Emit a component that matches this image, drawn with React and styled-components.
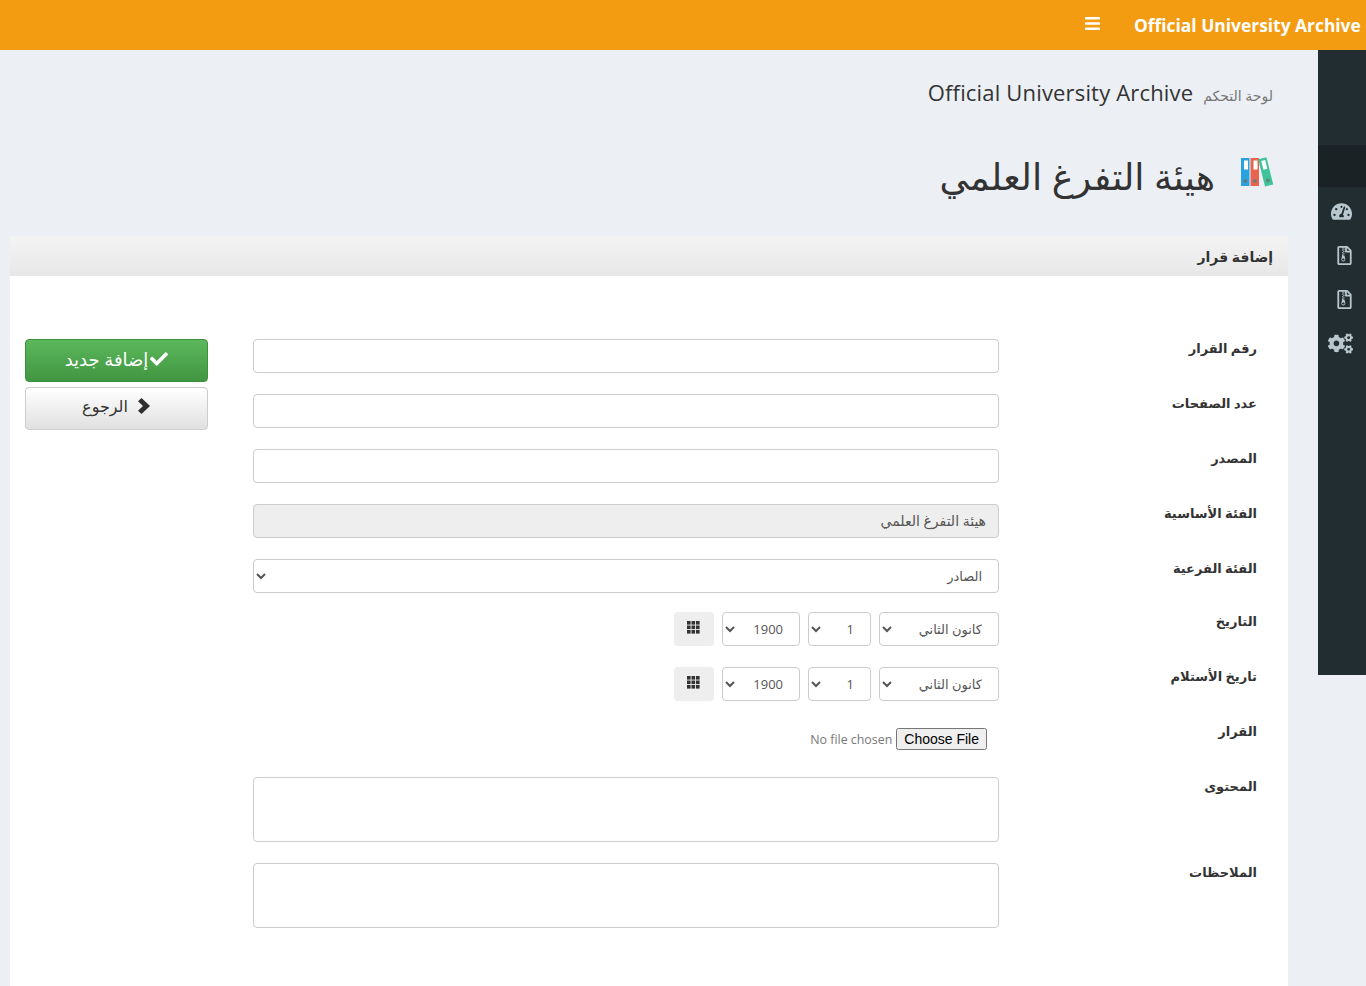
import React from 'react';
import styled, { createGlobalStyle } from 'styled-components';
import { FaBars, FaCheck, FaCogs, FaRegFileArchive, FaTachometerAlt } from 'react-icons/fa';

const Global = createGlobalStyle`
  html, body { margin: 0; padding: 0; height: 986px; overflow: hidden; }
  body {
    background: #ecf0f5;
    font-family: "Open Sans", "DejaVu Sans", sans-serif;
    color: #333;
    direction: rtl;
  }
  * { box-sizing: border-box; }
`;

const TopBar = styled.header`
  height: 50px;
  background: #f39c12;
  color: #fff;
  display: flex;
  align-items: center;
  padding-right: 5px;
`;

const Brand = styled.div`
  direction: ltr;
  font-size: 17.4px;
  font-weight: 700;
  width: 227px;
  white-space: nowrap;
`;

const MenuToggle = styled.span`
  margin-right: 33px;
  font-size: 17px;
  display: flex;
  position: relative;
  top: -2px;
`;

const Layout = styled.div`
  display: flex;
`;

const Sidebar = styled.nav`
  width: 48px;
  height: 625px;
  background: #222d32;
  padding-top: 95px;
  flex: none;
  color: #b8c7ce;
`;

const SideSpacer = styled.div`
  height: 42px;
  margin-bottom: 2px;
  background: #1a2226;
`;

const SideItem = styled.div`
  height: 44px;
  display: flex;
  align-items: center;
  justify-content: center;
  font-size: ${(p) => p.$size || 18}px;
  padding-left: ${(p) => p.$shift || 0}px;
  padding-right: ${(p) => p.$pull || 0}px;
`;

const Crumb = styled.div`
  display: flex;
  align-items: baseline;
  gap: 10px;
  padding: 27px 15px 0 0;
  height: 88px;
`;

const CrumbSmall = styled.small`
  font-size: 14px;
  color: #777;
`;

const CrumbTitle = styled.span`
  direction: ltr;
  font-size: 22px;
  letter-spacing: 0.17px;
  color: #333;
`;

const Content = styled.main`
  flex: 1;
  padding: 0 30px 0 10px;
`;

const PageTitle = styled.div`
  display: flex;
  align-items: center;
  gap: 26px;
  padding-right: 15px;
  height: 98px;
  padding-bottom: 30px;
`;

const PageHeading = styled.h1`
  margin: 0;
  font-size: 36.6px;
  font-weight: 400;
  color: #333;
  position: relative;
  top: 4px;
`;

const Panel = styled.section`
  background: #fff;
  height: 750px;
`;

const PanelHead = styled.div`
  height: 40px;
  background: linear-gradient(#f4f4f4, #e7e7e7);
  padding: 0 15px;
  display: flex;
  align-items: center;
  font-size: 14px;
  font-weight: 700;
`;

const PanelBody = styled.div`
  display: flex;
  padding: 63px 31px 0 15px;
  justify-content: space-between;
`;

const FormColumn = styled.div`
  width: 1004px;
`;

const Row = styled.div`
  display: grid;
  grid-template-columns: 258px 746px;
  margin-bottom: ${(p) => p.$after ?? 21}px;
`;

const Label = styled.label`
  font-size: 13px;
  font-weight: 700;
  line-height: 19px;
`;

const TextInput = styled.input`
  height: 34px;
  width: 100%;
  border: 1px solid #ccc;
  border-radius: 4px;
  padding: 4px 12px 6px;
  font: inherit;
  font-size: 14px;
  color: #555;
  background: ${(p) => (p.disabled ? '#eee' : '#fff')};
`;

const Select = styled.select`
  height: 34px;
  width: ${(p) => p.$width || '100%'};
  border: 1px solid #ccc;
  border-radius: 4px;
  padding: 6px 12px;
  font: inherit;
  font-size: 13px;
  color: #555;
  background: #fff;
`;

const DateControls = styled.div`
  display: flex;
  gap: 8px;
`;

const AddonButton = styled.span`
  width: 40px;
  height: 34px;
  background: #eee;
  border-radius: 4px;
  display: flex;
  justify-content: center;
  padding: 9px 2px 0 0;
`;

const FileInput = styled.input`
  font-family: "Open Sans", sans-serif;
  font-size: 12.4px;
  color: #777;
  width: 240px;
  margin: 6px 12px 0 0;
  height: 22px;

  &::file-selector-button {
    font-family: "Liberation Sans", sans-serif;
    font-size: 14px;
    height: 22px;
    padding: 1px 6px;
    margin: 0 0 0 4px;
  }
`;

const TextArea = styled.textarea`
  display: block;
  width: 100%;
  height: ${(p) => p.$h || 65}px;
  border: 1px solid #ccc;
  border-radius: 4px;
  resize: none;
`;

const Actions = styled.div`
  width: 183px;
  display: flex;
  flex-direction: column;
  gap: 5px;
`;

const Button = styled.button`
  height: 43px;
  width: 100%;
  border-radius: 4px;
  border: 1px solid ${(p) => (p.$primary ? '#3e8f3e' : '#ccc')};
  background: ${(p) =>
    p.$primary ? 'linear-gradient(#5cb85c, #419641)' : 'linear-gradient(#fff, #e0e0e0)'};
  color: ${(p) => (p.$primary ? '#fff' : '#333')};
  font: inherit;
  font-size: ${(p) => (p.$primary ? 18 : 16)}px;
  display: flex;
  align-items: center;
  justify-content: center;
  gap: ${(p) => p.$gap || 0}px;
  padding: 0 0 ${(p) => (p.$primary ? 3 : 5)}px;
`;

function BooksIcon() {
  return (
    <svg width="32" height="30" viewBox="0 0 32 30">
      <rect x="0" y="1" width="8.5" height="28" fill="#29a3df" />
      <rect x="3" y="3.5" width="4" height="9" fill="#fff" />
      <circle cx="4.3" cy="24" r="2" fill="#5d7a8c" />
      <rect x="9.5" y="1" width="8.5" height="28" fill="#e8644f" />
      <rect x="12.5" y="3.5" width="4" height="9" fill="#fff" />
      <circle cx="13.8" cy="24" r="2" fill="#7a7a7a" />
      <g transform="rotate(-14 24 15)">
        <rect x="20.5" y="1" width="8.5" height="28" fill="#3fc49a" />
        <rect x="23" y="3.5" width="4" height="9" fill="#fff" />
        <circle cx="24.8" cy="24" r="2" fill="#5f8a80" />
      </g>
    </svg>
  );
}

function GridIcon() {
  return (
    <svg width="13" height="13" viewBox="0 0 13 13" fill="#333">
      {[0, 4.5, 9].map((y) =>
        [0, 4.5, 9].map((x) => <rect key={`${x}-${y}`} x={x} y={y} width="3.6" height="3.6" />)
      )}
    </svg>
  );
}

function Chevron() {
  return (
    <svg width="13" height="16" viewBox="0 0 13 16" fill="#2f2f2f">
      <path d="M3.5 0 L12 8 L3.5 16 L0 12.8 L5 8 L0 3.2 Z" />
    </svg>
  );
}

function DateRow({ label }) {
  return (
    <Row>
      <Label>{label}</Label>
      <DateControls>
        <Select $width="120px"><option>كانون الثاني</option></Select>
        <Select $width="63px"><option>1</option></Select>
        <Select $width="78px"><option>1900</option></Select>
        <AddonButton><GridIcon /></AddonButton>
      </DateControls>
    </Row>
  );
}

export default function App() {
  return (
    <>
      <Global />
      <TopBar>
        <Brand>Official University Archive</Brand>
        <MenuToggle><FaBars /></MenuToggle>
      </TopBar>
      <Layout>
        <Sidebar>
          <SideSpacer />
          <SideItem $size={21} $pull={2}><FaTachometerAlt /></SideItem>
          <SideItem $size={19} $shift={4}><FaRegFileArchive /></SideItem>
          <SideItem $size={19} $shift={4}><FaRegFileArchive /></SideItem>
          <SideItem $size={25} $pull={4}><FaCogs /></SideItem>
        </Sidebar>
        <Content>
          <Crumb>
            <CrumbSmall>لوحة التحكم</CrumbSmall>
            <CrumbTitle>Official University Archive</CrumbTitle>
          </Crumb>
          <PageTitle>
            <BooksIcon />
            <PageHeading>هيئة التفرغ العلمي</PageHeading>
          </PageTitle>
          <Panel>
            <PanelHead>إضافة قرار</PanelHead>
            <PanelBody>
              <FormColumn>
                <Row>
                  <Label>رقم القرار</Label>
                  <TextInput />
                </Row>
                <Row>
                  <Label>عدد الصفحات</Label>
                  <TextInput />
                </Row>
                <Row>
                  <Label>المصدر</Label>
                  <TextInput />
                </Row>
                <Row>
                  <Label>الفئة الأساسية</Label>
                  <TextInput disabled value="هيئة التفرغ العلمي" readOnly />
                </Row>
                <Row $after={19}>
                  <Label>الفئة الفرعية</Label>
                  <Select><option>الصادر</option></Select>
                </Row>
                <DateRow label="التاريخ" />
                <DateRow label="تاريخ الأستلام" />
                <Row $after={27}>
                  <Label>القرار</Label>
                  <FileInput type="file" />
                </Row>
                <Row>
                  <Label>المحتوى</Label>
                  <TextArea />
                </Row>
                <Row>
                  <Label>الملاحظات</Label>
                  <TextArea />
                </Row>
              </FormColumn>
              <Actions>
                <Button $primary $gap={2}><FaCheck />إضافة جديد</Button>
                <Button $gap={10}><Chevron />الرجوع</Button>
              </Actions>
            </PanelBody>
          </Panel>
        </Content>
      </Layout>
    </>
  );
}
